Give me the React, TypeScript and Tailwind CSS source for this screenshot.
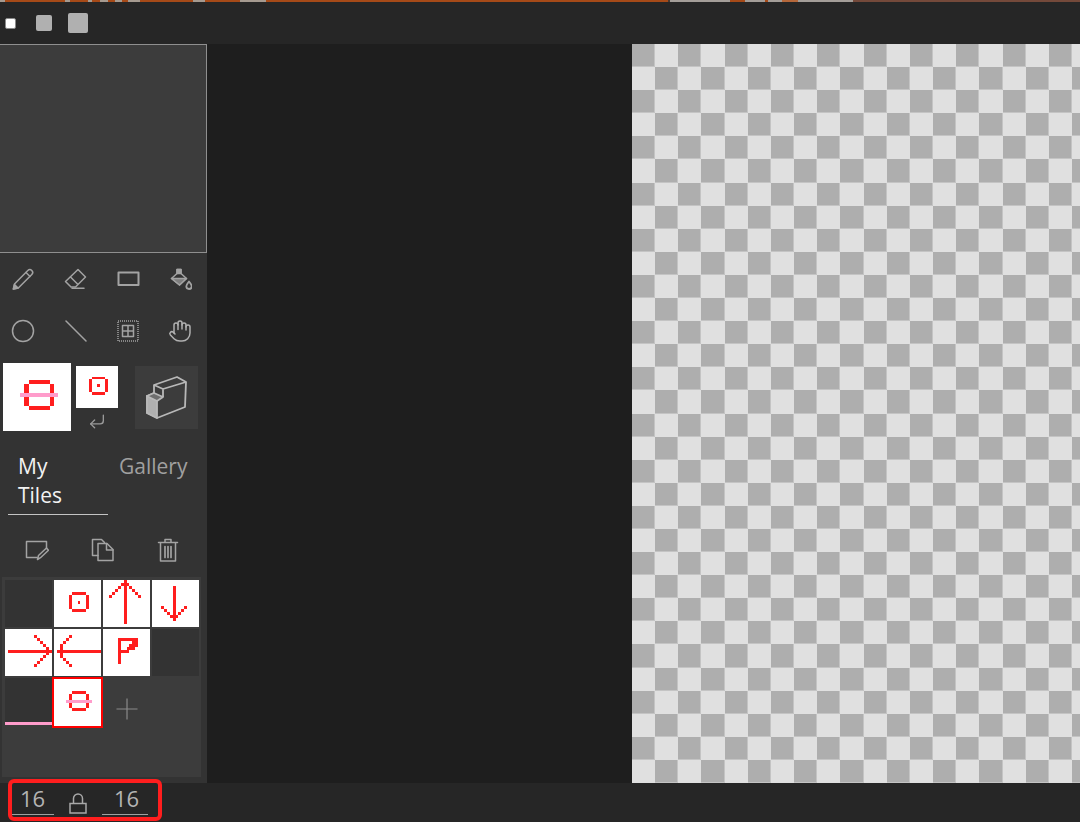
import { Hand, CornerDownLeft } from "lucide-react";

type Px = [number, number, number?, number?];

const RED = "#ff1e1e";
const PINK = "#ff9ccb";

const ringPx: Px[] = [
  [6, 4, 5],
  [6, 10, 5],
  [5, 5, 1, 5],
  [11, 5, 1, 5],
];
const target: Px[] = [...ringPx, [8, 7]];
const upArrow: Px[] = [[7, 0, 1, 15], [6, 1, 3], [5, 2], [9, 2], [4, 3], [10, 3], [3, 4], [11, 4], [2, 5], [12, 5]];
const downArrow: Px[] = [[7, 2, 1, 12], [3, 9], [11, 9], [4, 10], [10, 10], [5, 11], [9, 11], [6, 12, 3]];
const rightArrow: Px[] = [[1, 7, 15], [10, 2], [11, 3], [12, 4], [13, 5], [14, 6], [14, 8], [13, 9], [12, 10], [11, 11], [10, 12]];
const leftArrow: Px[] = [[1, 7, 15], [5, 2], [4, 3], [3, 4], [2, 5], [2, 6], [2, 8], [2, 9], [3, 10], [4, 11], [5, 12]];
const flag: Px[] = [[5, 3, 1, 9], [5, 3, 7], [10, 4, 2], [9, 5, 3], [8, 6, 3], [5, 7, 4]];

function Pixels({ px, extra, className }: { px: Px[]; extra?: Px[]; className: string }) {
  return (
    <svg viewBox="0 0 16 16" shapeRendering="crispEdges" className={className}>
      {px.map(([x, y, w = 1, h = 1], i) => (
        <rect key={i} x={x} y={y} width={w} height={h} fill={RED} />
      ))}
      {extra?.map(([x, y, w = 1, h = 1], i) => (
        <rect key={i} x={x} y={y} width={w} height={h} fill={PINK} />
      ))}
    </svg>
  );
}

function Tile({ px }: { px?: Px[] }) {
  return (
    <div className="w-[47px] h-[47px] bg-white">
      {px && <Pixels px={px} className="w-full h-full" />}
    </div>
  );
}

function Empty({ line }: { line?: boolean }) {
  return (
    <div className="w-[47px] h-[47px] bg-[#333333] flex items-end">
      {line && <div className="w-full h-[3px] bg-[#ff9ccb]" />}
    </div>
  );
}

function ToolIcon({ children }: { children: React.ReactNode }) {
  return (
    <svg
      viewBox="0 0 24 24"
      fill="none"
      stroke="#a3a3a3"
      strokeWidth={1.5}
      strokeLinejoin="round"
      strokeLinecap="round"
      className="w-6 h-6"
    >
      {children}
    </svg>
  );
}

const strip: [number, string][] = [
  [5, "#a59a90"], [60, "#a64a18"], [5, "#a59a90"], [18, "#a64a18"], [4, "#a59a90"], [8, "#a64a18"],
  [8, "#a59a90"], [7, "#a64a18"], [7, "#a59a90"], [6, "#a64a18"], [12, "#a59a90"], [53, "#a64a18"],
  [12, "#a59a90"], [35, "#a64a18"], [26, "#a59a90"], [402, "#a64a18"], [2, "#4a3a30"], [60, "#a39d98"],
  [15, "#a64a18"], [20, "#a39d98"], [3, "#a64a18"], [14, "#a39d98"], [16, "#b5673a"], [55, "#a39d98"],
  [227, "#74493a"],
];

const cells = Array.from({ length: 20 * 32 }, (_, i) => (i % 20) + Math.floor(i / 20));

export default function App() {
  return (
    <div className="relative w-[1080px] h-[822px] overflow-hidden flex flex-col bg-[#1e1e1e] font-['Open_Sans',sans-serif]">
      <div className="h-[2px] flex shrink-0">
        {strip.map(([w, c], i) => (
          <div key={i} className="h-full" style={{ width: w, background: c }} />
        ))}
      </div>

      {/* brush sizes */}
      <div className="h-[42px] shrink-0 bg-[#262626] flex items-center">
        <div className="ml-[5px] w-[11px] h-[11px] rounded-[2px] bg-white border border-[#8a8a8a]" />
        <div className="ml-[20px] w-4 h-4 rounded-[2px] bg-[#b0b0b0]" />
        <div className="ml-[16px] w-5 h-5 rounded-[2px] bg-[#b0b0b0]" />
      </div>

      <div className="flex-1 flex min-h-0">
        <aside className="w-[207px] shrink-0 bg-[#333333] flex flex-col">
          <div className="h-[209px] shrink-0 bg-[#3c3c3c] border border-l-0 border-[#8f8f8f]" />

          <div className="mt-[14px] ml-[11px] grid grid-cols-[repeat(4,24px)] gap-x-[28.4px] gap-y-[28px]">
            <ToolIcon>
              <path d="M3.500 17 16.800 3.500a2.700 2.700 0 0 1 4 4L7.300 21l-5 1Z" />
              <path d="m15 5.500 4 4" />
              <path d="M2.500 22l1-4.500 3.500 3.500Z" fill="#a3a3a3" />
            </ToolIcon>
            <ToolIcon>
              <path d="M15 2.500 22.500 10l-10 10H8L2.500 14.500Z" />
              <path d="m7.500 10 7 7" />
              <path d="M9 21.200h12" />
            </ToolIcon>
            <ToolIcon>
              <rect x="2.500" y="5.500" width="20" height="12.500" strokeWidth={2} />
            </ToolIcon>
            <ToolIcon>
              <path d="M3.500 11.500 9 6.500V2.500h4v4l5.500 5-7 6.500Z" />
              <path d="M9 6.500V2.500h4v4Z" fill="#a3a3a3" />
              <path d="M3.500 11.500h15L11.500 18Z" fill="#7e7e7e" />
              <path d="M21 14.500c-1.500 2-2.700 3.200-2.700 4.800a2.700 2.700 0 0 0 5.400 0c0-1.600-1.200-2.800-2.700-4.800Z" strokeWidth={1.800} />
            </ToolIcon>

            <ToolIcon>
              <circle cx="12" cy="12" r="10.500" />
            </ToolIcon>
            <ToolIcon>
              <path d="m3 2 20 20" />
            </ToolIcon>
            <ToolIcon>
              <rect x="2" y="2" width="20" height="20" strokeWidth={1.500} strokeDasharray="1 1" strokeLinecap="butt" />
              <path d="M6.500 6.500h11v11h-11ZM12 6.500v11M6.500 12h11" strokeWidth={1.500} />
            </ToolIcon>
            <Hand size={24} strokeWidth={1.500} color="#b0b0b0" />
          </div>

          <div className="mt-[20px] h-[68px] shrink-0 flex">
            <div className="ml-[3px] w-[68px] h-[68px] bg-white">
              <Pixels px={ringPx} extra={[[4, 7, 9]]} className="w-full h-full" />
            </div>
            <div className="ml-[5px] flex flex-col items-center mt-[3px]">
              <div className="w-[42px] h-[42px] bg-white">
                <Pixels px={target} className="w-full h-full" />
              </div>
              <CornerDownLeft size={22} strokeWidth={1.700} color="#9a9a9a" className="mt-[4px]" />
            </div>
            <div className="ml-[17px] mt-[3px] w-[63px] h-[63px] bg-[#3c3c3c]">
              <svg viewBox="0 0 63 63" className="w-full h-full" fill="none" stroke="#b8b8b8" strokeWidth={1.800} strokeLinejoin="round">
                <path d="M19 19 42 11l9 5-1 25-28 11-10-5V30l7-3Z" />
                <path d="M12 30l10 5v17l-10-5Z" fill="#b0b0b0" />
                <path d="M19 27l9 4-6 4-10-5Z" fill="#6e6e6e" />
                <path d="M19 19l9 4 23-7M28 23v8" />
              </svg>
            </div>
          </div>

          <div className="mt-[21px] flex text-[21px] leading-[29px]">
            <div className="ml-[8px] w-[100px] pl-[10px] pb-[4px] border-b border-[#c4c4c4] text-[#f2f2f2]">
              My
              <br />
              Tiles
            </div>
            <div className="ml-[11px] text-[#a0a0a0]">Gallery</div>
          </div>

          <div className="mt-[23px] ml-[25px] flex">
            <ToolIcon>
              <path d="M12 19.500H1.500V3.500h20v7" />
              <path d="M12.500 21.500l1-4 8-7.500 2 2.200-8 7.500Z" />
            </ToolIcon>
            <div className="ml-[42px]">
              <ToolIcon>
                <path d="M7 17.500H1.500V1.500h9l3 3" />
                <path d="M7 5.500h9l6 6v11H7Z" />
                <path d="M15.500 5.500v6.500H22" />
              </ToolIcon>
            </div>
            <div className="ml-[41px]">
              <ToolIcon>
                <path d="M4.500 5.500V23h15V5.500M2.500 4.500h19M9 4.500V1.500h6v3" />
                <path d="M9 8.500v11M12 8.500v11M15 8.500v11" strokeWidth={1.700} />
              </ToolIcon>
            </div>
          </div>

          <div className="mt-[15px] mx-[2px] w-[199px] h-[200px] bg-[#3c3c3c] pt-[3px] pl-[3px]">
            <div className="grid grid-cols-[repeat(4,47px)] grid-rows-[repeat(3,47px)] gap-x-[2px] gap-y-[2px]">
              <Empty />
              <Tile px={target} />
              <Tile px={upArrow} />
              <Tile px={downArrow} />
              <Tile px={rightArrow} />
              <Tile px={leftArrow} />
              <Tile px={flag} />
              <Empty />
              <Empty line />
              <div className="relative w-[47px] h-[47px] mt-[1px] bg-white">
                <Pixels px={ringPx} extra={[[4, 7, 9]]} className="w-full h-full" />
                <div className="absolute -inset-[2px] border-[2px] border-[#ff0000]" />
              </div>
              <div className="flex items-center justify-center">
                <svg viewBox="0 0 24 24" className="w-6 h-6 mt-[14px]" stroke="#8a8a8a" strokeWidth={1.200}>
                  <path d="M12 1.500v21M1.500 12h21" />
                </svg>
              </div>
            </div>
          </div>
        </aside>

        <main className="flex-1 flex justify-end overflow-hidden">
          <div className="w-[448px] h-full grid grid-cols-[repeat(20,23.17px)] grid-rows-[repeat(32,23.1px)] overflow-hidden">
            {cells.map((n, i) => (
              <div
                key={i}
                className={n % 2 === 0 ? "bg-[#aeaeae] border-r border-b border-[#c4c4c4]" : "bg-[#e0e0e0]"}
              />
            ))}
          </div>
        </main>
      </div>

      {/* size inputs */}
      <div className="h-[39px] shrink-0 bg-[#262626] flex text-[22px] leading-[30px] text-[#b4b4b4]">
        <div className="ml-[12px] w-[42px] h-[32px] pl-[8px] border-b border-[#a0a0a0]">16</div>
        <svg viewBox="0 0 18 22" fill="none" stroke="#a8a8a8" strokeWidth={1.500} className="ml-[15px] mt-[9px] w-[18px] h-[22px]">
          <rect x="1" y="11.500" width="16" height="9.500" />
          <path d="M4.500 11V6.500a4.500 4.500 0 0 1 9 0V11" />
        </svg>
        <div className="ml-[15px] w-[46px] h-[32px] pl-[12px] border-b border-[#a0a0a0]">16</div>
      </div>
      <div className="absolute left-[8px] top-[779px] w-[154px] h-[42px] rounded-[6px] border-[4px] border-[#ff1e1e]" />
    </div>
  );
}
